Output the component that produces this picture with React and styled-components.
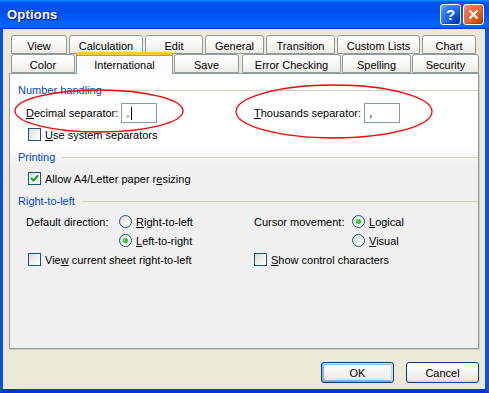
import React from 'react';
import styled, { createGlobalStyle } from 'styled-components';

const GlobalStyle = createGlobalStyle`
  html, body {
    margin: 0;
    padding: 0;
    background: #ffffff;
  }
  body {
    font-family: "Liberation Sans", Arial, sans-serif;
    font-size: 11px;
    color: #000000;
  }
`;

const Window = styled.div`
  width: 489px;
  height: 393px;
  display: flex;
  flex-direction: column;
  overflow: hidden;
`;

const TitleBar = styled.div`
  height: 29px;
  flex: none;
  display: flex;
  align-items: center;
  padding: 0 5px 0 7px;
  background: linear-gradient(
    180deg,
    #0997ff,
    #0053ee 8%,
    #0050ee 40%,
    #0066ff 88%,
    #0066ff 93%,
    #005bff 95%,
    #003dd7 96%,
    #003dd7
  );
`;

const Title = styled.div`
  flex: 1;
  color: #ffffff;
  font-weight: bold;
  font-size: 13px;
  letter-spacing: 0.2px;
  text-shadow: 1px 1px 0 #0f1089;
`;

const TitleButton = styled.div`
  width: 21px;
  height: 21px;
  box-sizing: border-box;
  margin-left: 2px;
  border: 1px solid #ffffff;
  border-radius: 3px;
  display: flex;
  align-items: center;
  justify-content: center;
  color: #ffffff;
  font-weight: bold;
  font-size: 15px;
  background: ${(p) =>
    p.danger
      ? 'radial-gradient(circle at 85% 85%, #cc4600 0%, #dc6527 40%, #e9704a 70%, #f2a08a 100%)'
      : 'radial-gradient(circle at 85% 85%, #0037b8 0%, #1f66e8 45%, #3e84f8 75%, #7eb0ff 100%)'};
  box-shadow: inset -1px -1px 1px rgba(0, 0, 0, 0.25);
`;

const Frame = styled.div`
  flex: 1;
  display: flex;
  flex-direction: column;
  border-left: 3px solid #0b52e0;
  border-right: 4px solid #0b52e0;
  border-bottom: 4px solid #0831d9;
  background: #ece9d8;
  padding: 6px 6px 0 6px;
`;

const TabRow = styled.div`
  display: flex;
  gap: ${(p) => p.gap}px;
  margin-left: 2px;
  height: 19px;
  align-items: flex-end;
  position: relative;
  z-index: ${(p) => p.layer};
`;

const Tab = styled.div`
  width: ${(p) => p.width}px;
  margin-left: ${(p) => p.shift || 0}px;
  box-sizing: border-box;
  height: ${(p) => (p.active ? 22 : 19)}px;
  margin-bottom: ${(p) => (p.active ? -1 : 0)}px;
  display: flex;
  align-items: center;
  justify-content: center;
  padding-top: ${(p) => (p.active ? 0 : 2)}px;
  border: 1px solid #919b9c;
  border-bottom: ${(p) => (p.active ? 'none' : '1px solid #919b9c')};
  border-top: ${(p) => (p.active ? '3px solid #ffc83c' : '1px solid #919b9c')};
  border-radius: 3px 3px 0 0;
  background: ${(p) =>
    p.active
      ? '#fcfcfe'
      : 'linear-gradient(180deg, #ffffff 0%, #f7f7f4 50%, #ecebe6 100%)'};
  white-space: nowrap;
  box-shadow: ${(p) => (p.active ? 'inset 0 1px 0 #e68b2c' : 'none')};
`;

const Panel = styled.div`
  position: relative;
  z-index: 1;
  height: 276px;
  box-sizing: border-box;
  border: 1px solid #919b9c;
  box-shadow: 1px 1px 0 #d0cebf;
  padding: 9px 0 0 8px;
  background: linear-gradient(
    180deg,
    #ffffff 0px,
    #ffffff 72px,
    #f4f4f4 84px,
    #f0f0f0 96px,
    #f0f0f0 100%
  );
`;

const GroupHeader = styled.div`
  display: flex;
  align-items: center;
  height: 14px;
  margin-top: ${(p) => p.top || 0}px;
  color: #0046d5;
  &::after {
    content: '';
    flex: 1;
    height: 1px;
    margin-left: 7px;
    background: #d0d0bf;
  }
`;

const FieldGrid = styled.div`
  display: grid;
  grid-template-columns: 228px auto;
  margin: 6px 0 0 8px;
  height: 20px;
`;

const Field = styled.label`
  display: flex;
  align-items: center;
  gap: 3px;
`;

const TextBox = styled.div`
  width: 36px;
  height: 20px;
  box-sizing: border-box;
  border: 1px solid #7f9db9;
  background: #ffffff;
  display: flex;
  align-items: center;
  padding-left: 4px;
  font-size: 12px;
`;

const Caret = styled.span`
  display: inline-block;
  width: 1px;
  height: 13px;
  margin-left: 1px;
  background: #000000;
`;

const CheckRow = styled.label`
  display: flex;
  align-items: center;
  gap: 4px;
  height: 15px;
  margin: ${(p) => p.top}px 0 0 10px;
`;

const Box = styled.span`
  width: 13px;
  height: 13px;
  box-sizing: border-box;
  border: 1px solid #1c5180;
  background: linear-gradient(135deg, #dcdcd7 0%, #f0f0ea 50%, #ffffff 100%);
  display: flex;
  align-items: center;
  justify-content: center;
  flex: none;
`;

const Round = styled.span`
  width: 13px;
  height: 13px;
  box-sizing: border-box;
  border-radius: 50%;
  border: 1px solid #1c5180;
  background: linear-gradient(135deg, #dcdcd7 0%, #f0f0ea 50%, #ffffff 100%);
  display: flex;
  align-items: center;
  justify-content: center;
  flex: none;
  &::after {
    content: '';
    display: ${(p) => (p.checked ? 'block' : 'none')};
    width: 5px;
    height: 5px;
    border-radius: 50%;
    background: radial-gradient(circle at 40% 40%, #55d551, #21a121);
  }
`;

const DirGrid = styled.div`
  display: grid;
  grid-template-columns: 93px 135px 98px auto;
  grid-auto-rows: 15px;
  row-gap: 4px;
  margin: 6px 0 0 8px;
`;

const Label = styled.span`
  display: flex;
  align-items: center;
`;

const RadioRow = styled.label`
  display: flex;
  align-items: center;
  gap: 4px;
  grid-column: ${(p) => p.col};
`;

const GridCheck = styled.label`
  display: flex;
  align-items: center;
  gap: 4px;
  grid-column: ${(p) => p.col};
  padding-left: ${(p) => p.indent || 0}px;
`;

const Annotations = styled.svg`
  position: absolute;
  left: 0;
  top: 0;
  width: 470px;
  height: 120px;
  pointer-events: none;
  overflow: visible;
`;

const ButtonRow = styled.div`
  display: flex;
  justify-content: flex-end;
  gap: 12px;
  margin-top: 13px;
`;

const Button = styled.div`
  width: 73px;
  height: 21px;
  box-sizing: border-box;
  border: 1px solid #003c74;
  border-radius: 3px;
  display: flex;
  align-items: center;
  justify-content: center;
  background: linear-gradient(180deg, #ffffff 0%, #ecebe6 86%, #d6d0c5 100%);
  box-shadow: ${(p) =>
    p.primary
      ? 'inset -1px 1px #cee7ff, inset 1px 2px #98b8ea, inset -2px 2px #bcd4f6, inset 1px -1px #89ade4, inset 2px -2px #89ade4'
      : 'none'};
`;

function Check({ checked }) {
  return (
    <Box>
      {checked && (
        <svg width="9" height="9" viewBox="0 0 9 9">
          <path d="M1 4 L3.5 6.5 L8 1.5" stroke="#21a121" strokeWidth="2" fill="none" />
        </svg>
      )}
    </Box>
  );
}

const TOP_TABS = [
  ['View', 56],
  ['Calculation', 74],
  ['Edit', 58],
  ['General', 59],
  ['Transition', 69],
  ['Custom Lists', 83],
  ['Chart', 54],
];

const BOTTOM_TABS = [
  ['Color', 64, 0],
  ['International', 97, 0],
  ['Save', 65, 0],
  ['Error Checking', 99, 2],
  ['Spelling', 69, 0],
  ['Security', 67, 0],
];

export default function App() {
  return (
    <>
      <GlobalStyle />
      <Window>
        <TitleBar>
          <Title>Options</Title>
          <TitleButton>?</TitleButton>
          <TitleButton danger>
            <svg width="11" height="11" viewBox="0 0 11 11">
              <path d="M1.5 1.5 L9.5 9.5 M9.5 1.5 L1.5 9.5" stroke="#fff" strokeWidth="2.2" />
            </svg>
          </TitleButton>
        </TitleBar>
        <Frame>
          <TabRow gap={2} layer={0}>
            {TOP_TABS.map(([name, w]) => (
              <Tab key={name} width={w}>
                {name}
              </Tab>
            ))}
          </TabRow>
          <TabRow gap={1} layer={2}>
            {BOTTOM_TABS.map(([name, w, shift]) => (
              <Tab key={name} width={w} shift={shift} active={name === 'International'}>
                {name}
              </Tab>
            ))}
          </TabRow>
          <Panel>
            <GroupHeader>Number handling</GroupHeader>
            <FieldGrid>
              <Field>
                <span>
                  <u>D</u>ecimal separator:
                </span>
                <TextBox>
                  .<Caret />
                </TextBox>
              </Field>
              <Field>
                <span>
                  <u>T</u>housands separator:
                </span>
                <TextBox>,</TextBox>
              </Field>
            </FieldGrid>
            <CheckRow top={4}>
              <Check />
              <span>
                <u>U</u>se system separators
              </span>
            </CheckRow>

            <GroupHeader top={8}>Printing</GroupHeader>
            <CheckRow top={7}>
              <Check checked />
              <span>
                Allow A4/Letter paper r<u>e</u>sizing
              </span>
            </CheckRow>

            <GroupHeader top={8}>Right-to-left</GroupHeader>
            <DirGrid>
              <Label>Default direction:</Label>
              <RadioRow col="2">
                <Round />
                <span>
                  <u>R</u>ight-to-left
                </span>
              </RadioRow>
              <Label>Cursor movement:</Label>
              <RadioRow col="4">
                <Round checked />
                <span>
                  <u>L</u>ogical
                </span>
              </RadioRow>
              <RadioRow col="2">
                <Round checked />
                <span>
                  <u>L</u>eft-to-right
                </span>
              </RadioRow>
              <RadioRow col="4">
                <Round />
                <span>
                  <u>V</u>isual
                </span>
              </RadioRow>
              <GridCheck col="1 / span 2" indent={2}>
                <Check />
                <span>
                  Vie<u>w</u> current sheet right-to-left
                </span>
              </GridCheck>
              <GridCheck col="3 / span 2">
                <Check />
                <span>
                  <u>S</u>how control characters
                </span>
              </GridCheck>
            </DirGrid>

            <Annotations viewBox="0 0 470 120">
              <ellipse cx="89" cy="37" rx="84" ry="21" fill="none" stroke="#ff0000" strokeWidth="1.3" />
              <ellipse cx="324" cy="37.5" rx="98" ry="26.5" fill="none" stroke="#ff0000" strokeWidth="1.3" />
            </Annotations>
          </Panel>
          <ButtonRow>
            <Button primary>OK</Button>
            <Button>Cancel</Button>
          </ButtonRow>
        </Frame>
      </Window>
    </>
  );
}
